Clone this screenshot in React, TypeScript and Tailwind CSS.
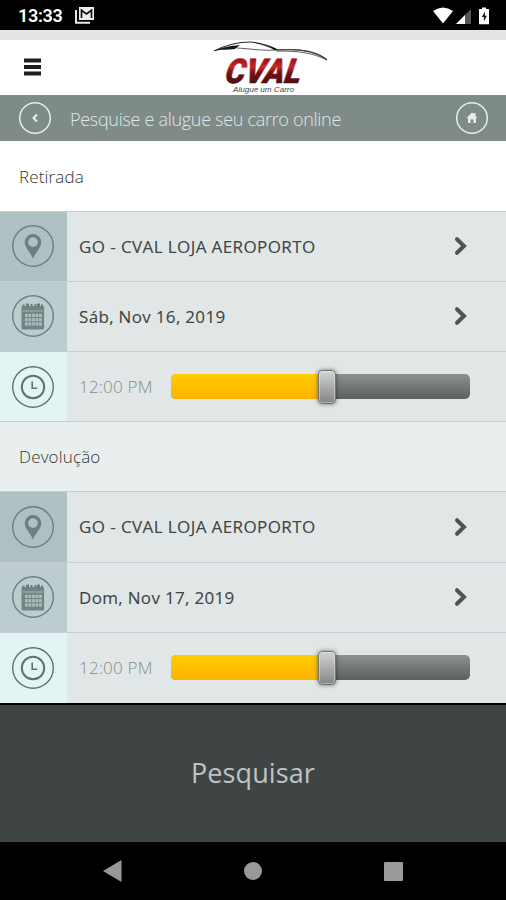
import React from "react";

function Ring({ children, color }: { children: React.ReactNode; color: string }) {
  return (
    <svg width="42" height="42" viewBox="0 0 42 42" fill="none" stroke={color}>
      <circle cx="21" cy="21" r="20.3" strokeWidth="1.4" />
      {children}
    </svg>
  );
}

function PinIcon() {
  return (
    <Ring color="#6b7f7e">
      <path
        d="M21 33.5C18.500 27.500 12.700 22.500 12.700 17.300a8.300 8.300 0 0 1 16.600 0C29.300 22.500 23.500 27.500 21 33.500ZM21 12.200a4.900 4.900 0 1 0 0 9.800a4.900 4.900 0 0 0 0-9.800Z"
        fill="#6b7f7e"
        fillRule="evenodd"
        stroke="none"
      />
    </Ring>
  );
}

function CalendarIcon() {
  const columns = [13.1, 16.6, 20.1, 23.6, 27.1];
  const lines = [18.8, 23.1, 27.4];
  return (
    <Ring color="#6b7f7e">
      <rect x="9.500" y="11" width="22.600" height="23.400" rx="1.500" fill="#728483" stroke="none" />
      <path d="M11.500 9.500v2M19.500 9v2M23.500 9v2M30 9.500v2" stroke="#6b7f7e" strokeWidth="2" />
      <path d="M15.500 8.500v4M26.500 8.500v4" stroke="#6b7f7e" strokeWidth="3" />
      <path d="M10.500 16h20.700" stroke="#a9bbbb" strokeWidth="0.900" />
      {lines.map((y) =>
        columns.map((x) => (
          <rect key={`${x}-${y}`} x={x} y={y} width="2.700" height="3.200" fill="#adbebe" stroke="none" />
        ))
      )}
    </Ring>
  );
}

function ClockIcon() {
  return (
    <Ring color="#5f7170">
      <circle cx="21" cy="21" r="11.200" strokeWidth="2" />
      <path d="M20.200 15.500v6.700h5" strokeWidth="1.600" />
    </Ring>
  );
}

function Chevron() {
  return (
    <svg width="16" height="20" viewBox="0 0 16 20" fill="none" stroke="#4d5553" strokeWidth="4" className="mr-[37px]">
      <path d="M4 3.200L11 10L4 16.800" strokeLinecap="round" />
    </svg>
  );
}

function PickRow({ icon, text, tone, spacing }: { icon: React.ReactNode; text: string; tone: string; spacing: string }) {
  return (
    <div className="flex h-full">
      <div className={`flex w-[67px] items-center justify-center pr-px pb-px ${tone}`}>{icon}</div>
      <div className="flex flex-1 items-center justify-between pb-px pl-3">
        <span className={`whitespace-nowrap pt-px text-[17px] font-medium text-[#3d4443] [-webkit-text-stroke:0.1px_#3d4443] ${spacing}`}>{text}</span>
        <Chevron />
      </div>
    </div>
  );
}

function TimeRow({ inset }: { inset: string }) {
  return (
    <div className="flex h-full">
      <div className={`flex w-[67px] items-center justify-center bg-[#e4f3f3] pr-px ${inset}`}>
        <ClockIcon />
      </div>
      <div className={`flex flex-1 items-center pl-3 ${inset}`}>
        <span className="w-[92px] whitespace-nowrap pt-px text-[17px] font-light tracking-[0.2px] text-[#858c8b]">12:00 PM</span>
        <div className="flex h-[25px] w-[299px] items-center rounded-[5px] bg-linear-to-b from-[#8b928f] to-[#5b615e]">
          <div className="h-[25px] w-[147px] rounded-l-[5px] bg-linear-to-b from-[#ffcc00] to-[#ffb300]" />
          <div className="h-[34px] w-[18px] rounded-[4px] border border-[#727575] bg-linear-to-b from-[#d2d3d3] to-[#858686] shadow-[inset_0_0_0_1px_rgba(255,255,255,0.35),0_0_4px_rgba(0,0,0,0.5)]" />
        </div>
      </div>
    </div>
  );
}

function Logo() {
  return (
    <svg width="122" height="55" viewBox="0 0 122 55" className="ml-[172px]">
      <defs>
        <linearGradient id="logoRed" x1="0" y1="0" x2="0" y2="1">
          <stop offset="0.250" stopColor="#a81318" />
          <stop offset="0.400" stopColor="#c5272b" />
          <stop offset="0.550" stopColor="#761216" />
          <stop offset="0.850" stopColor="#4b0c0f" />
        </linearGradient>
      </defs>
      <path d="M1 11C11 6 22 2 37 2C50 2 57 9 66 10C86 8.500 104 11 114 20" fill="none" stroke="#29292b" strokeWidth="1.200" />
      <path d="M1 11C10 7 17 6 27 5L22 9C16 10 9 9 1 11ZM44 2.500C54 4 60 7 66 10L61 10C56 6 51 4 44 2.500Z" fill="#151517" />
      <path d="M24 8C40 9 50 11 64 10C83 8 102 11 114 20C98 12 84 11 63 11" fill="none" stroke="#4c4c4f" strokeWidth="0.900" />
      <text
        x="0"
        y="0"
        transform="translate(11 42.500) skewX(-10)"
        textLength="76"
        lengthAdjust="spacingAndGlyphs"
        fontFamily="Roboto, sans-serif"
        fontSize="34"
        fontWeight="900"
        fontStyle="italic"
        fill="url(#logoRed)"
        stroke="url(#logoRed)"
        strokeWidth="0.600"
      >
        CVAL
      </text>
      <text x="20" y="52" textLength="61" lengthAdjust="spacingAndGlyphs" fontFamily="Liberation Sans, sans-serif" fontSize="7.500" fontStyle="italic" fill="#454548">
        Alugue um Carro
      </text>
    </svg>
  );
}

function StatusBar() {
  return (
    <div className="flex h-[30px] items-center justify-between bg-black pt-px text-white">
      <div className="flex items-center pl-[18px]">
        <span className="w-[57px] font-['Roboto',sans-serif] text-[18px] leading-5 font-semibold tracking-[-0.3px]">13:33</span>
        <svg width="19" height="17" viewBox="0 0 19 17">
          <path d="M1 3V15.800H15" fill="none" stroke="#e8e8e8" strokeWidth="2" />
          <path d="M4 0H19V13H4Z" fill="#eee" />
          <path d="M6.500 11V3.200L11.500 7L16.500 3.200V11" fill="none" stroke="#111" strokeWidth="1.700" />
        </svg>
      </div>
      <svg width="58" height="18" viewBox="0 0 58 18" className="mr-[15px]">
        <path d="M0 4Q10 -3 20 4L10 16.500Z" fill="#fff" />
        <path d="M38 2V17H23Z" fill="#555" />
        <path d="M32 8V17H23Z" fill="#fff" />
        <path d="M49 2V0.500H53V2H56V17.200H46V2Z" fill="#fff" />
        <path d="M52 4.500L48.700 10H50.800V14.500L54 8.700H52Z" fill="#222" />
      </svg>
    </div>
  );
}

interface SectionProps {
  title: string;
  date: string;
  head: string;
  first: string;
  last: string;
  inset: string;
}

function Section({ title, date, head, first, last, inset }: SectionProps) {
  return (
    <section>
      <div className={`flex items-center pl-[19px] ${head}`}>
        <h2 className="text-[17px] font-light tracking-[0.15px] text-[#303635]">{title}</h2>
      </div>
      <div className={`border-t border-[#c6cfcf] ${first}`}>
        <PickRow icon={<PinIcon />} text="GO - CVAL LOJA AEROPORTO" tone="bg-[#aec0c2]" spacing="tracking-[0.4px]" />
      </div>
      <div className="h-[70px] border-t border-[#c6cfcf]">
        <PickRow icon={<CalendarIcon />} text={date} tone="bg-[#bccccf]" spacing="tracking-[0.32px]" />
      </div>
      <div className={`border-t border-[#c6cfcf] ${last}`}>
        <TimeRow inset={inset} />
      </div>
    </section>
  );
}

export default function App() {
  return (
    <main className="flex h-[900px] w-[506px] flex-col overflow-hidden bg-[#e1e6e6] font-['Open_Sans','Noto_Sans',sans-serif]">
      <StatusBar />
      <header className="flex h-[65px] items-end border-t-[10px] border-[#e1e5e5] bg-white">
        <svg width="17" height="18" viewBox="0 0 17 18" className="mb-[19px] ml-6">
          <path d="M0 2.500H17M0 9H17M0 15.500H17" stroke="#1b2023" strokeWidth="4" />
        </svg>
        <Logo />
      </header>
      <nav className="flex h-[46px] items-center bg-[#7e8b89] px-[19px] text-[#e0e7e6]">
        <svg width="32" height="34" viewBox="0 0 32 34" fill="none" stroke="#e8eeee">
          <circle cx="16" cy="17" r="15.300" strokeWidth="1.500" />
          <path d="M18 13.500L14.500 17L18 20.500" strokeWidth="2" />
        </svg>
        <span className="ml-[19px] whitespace-nowrap pt-0.5 text-[18px] font-light tracking-[-0.3px]">Pesquise e alugue seu carro online</span>
        <svg width="34" height="34" viewBox="0 0 34 34" fill="none" stroke="#e8eeee" className="-mr-0.5 ml-auto">
          <circle cx="17" cy="17" r="15.300" strokeWidth="1.500" />
          <path d="M11.500 17L17 11.500L18.500 13V12H20.500V15L22.500 17H21V22H18.500V18.500H15.500V22H13V17Z" fill="#e8eeee" stroke="none" />
        </svg>
      </nav>
      <Section title="Retirada" date="Sáb, Nov 16, 2019" head="h-[70px] pt-px bg-white" first="h-[70px]" last="h-[70px]" inset="pb-0" />
      <div className="border-t border-[#c6cfcf]">
        <Section title="Devolução" date="Dom, Nov 17, 2019" head="h-[69px] pt-px bg-[#e9efef]" first="h-[71px]" last="h-[71px]" inset="pb-px" />
      </div>
      <button className="h-[139px] border-t-2 border-black bg-[#3f4544] text-[27px] tracking-[0.1px] text-[#bfc4c3]">Pesquisar</button>
      <footer className="flex h-[58px] items-center justify-between bg-black pr-[103px] pl-[103px]">
        <svg width="19" height="22" viewBox="0 0 19 22">
          <path d="M0 11L18.500 0V22Z" fill="#999" />
        </svg>
        <div className="size-[18px] rounded-full bg-[#999]" />
        <div className="size-[19px] rounded-[1px] bg-[#999]" />
      </footer>
    </main>
  );
}
